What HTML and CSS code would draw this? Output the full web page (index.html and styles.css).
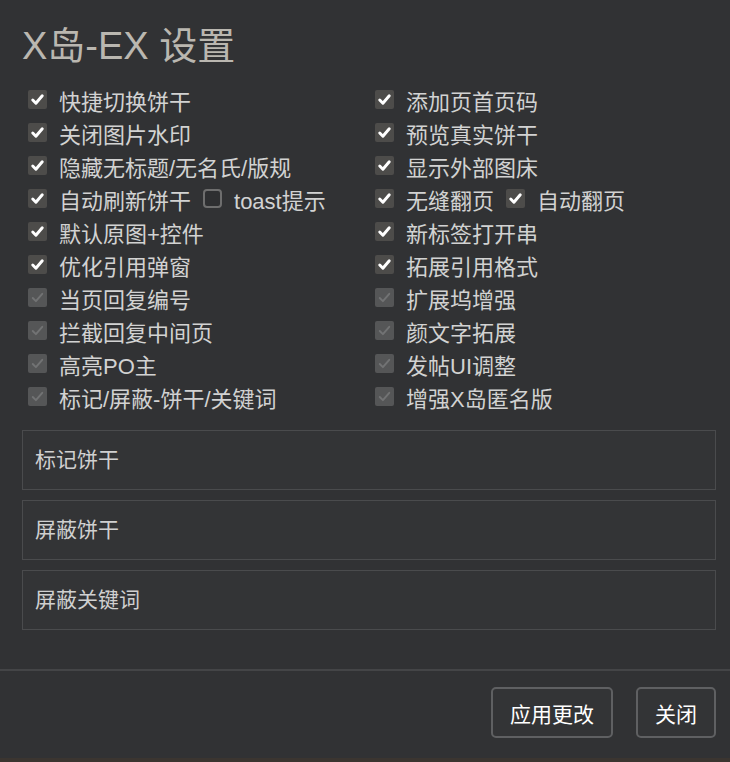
FILE: index.html
```html
<!DOCTYPE html>
<html lang="zh-CN">
<head>
    <meta charset="UTF-8">
    <meta name="viewport" content="width=device-width, initial-scale=1.0">
    <title>X岛-EX 设置</title>
    <link rel="stylesheet" href="styles.css">
</head>
<body>
    <div class="dialog">
        <div class="dialog-body">
            <h1>X岛-EX 设置</h1>
            <div class="options">
                <div class="opt"><span class="box on"><svg viewBox="0 0 18 18"><path d="M4.5 9.5l3 3 6-7"/></svg></span>快捷切换饼干</div>
                <div class="opt"><span class="box on"><svg viewBox="0 0 18 18"><path d="M4.5 9.5l3 3 6-7"/></svg></span>添加页首页码</div>
                <div class="opt"><span class="box on"><svg viewBox="0 0 18 18"><path d="M4.5 9.5l3 3 6-7"/></svg></span>关闭图片水印</div>
                <div class="opt"><span class="box on"><svg viewBox="0 0 18 18"><path d="M4.5 9.5l3 3 6-7"/></svg></span>预览真实饼干</div>
                <div class="opt"><span class="box on"><svg viewBox="0 0 18 18"><path d="M4.5 9.5l3 3 6-7"/></svg></span>隐藏无标题/无名氏/版规</div>
                <div class="opt"><span class="box on"><svg viewBox="0 0 18 18"><path d="M4.5 9.5l3 3 6-7"/></svg></span>显示外部图床</div>
                <div class="opt"><span class="box on"><svg viewBox="0 0 18 18"><path d="M4.5 9.5l3 3 6-7"/></svg></span>自动刷新饼干<span class="box off sub"></span>toast提示</div>
                <div class="opt"><span class="box on"><svg viewBox="0 0 18 18"><path d="M4.5 9.5l3 3 6-7"/></svg></span>无缝翻页<span class="box on sub"><svg viewBox="0 0 18 18"><path d="M4.5 9.5l3 3 6-7"/></svg></span>自动翻页</div>
                <div class="opt"><span class="box on"><svg viewBox="0 0 18 18"><path d="M4.5 9.5l3 3 6-7"/></svg></span>默认原图+控件</div>
                <div class="opt"><span class="box on"><svg viewBox="0 0 18 18"><path d="M4.5 9.5l3 3 6-7"/></svg></span>新标签打开串</div>
                <div class="opt"><span class="box on"><svg viewBox="0 0 18 18"><path d="M4.5 9.5l3 3 6-7"/></svg></span>优化引用弹窗</div>
                <div class="opt"><span class="box on"><svg viewBox="0 0 18 18"><path d="M4.5 9.5l3 3 6-7"/></svg></span>拓展引用格式</div>
                <div class="opt"><span class="box dis"><svg viewBox="0 0 18 18"><path d="M4.5 9.5l3 3 6-7"/></svg></span>当页回复编号</div>
                <div class="opt"><span class="box dis"><svg viewBox="0 0 18 18"><path d="M4.5 9.5l3 3 6-7"/></svg></span>扩展坞增强</div>
                <div class="opt"><span class="box dis"><svg viewBox="0 0 18 18"><path d="M4.5 9.5l3 3 6-7"/></svg></span>拦截回复中间页</div>
                <div class="opt"><span class="box dis"><svg viewBox="0 0 18 18"><path d="M4.5 9.5l3 3 6-7"/></svg></span>颜文字拓展</div>
                <div class="opt"><span class="box dis"><svg viewBox="0 0 18 18"><path d="M4.5 9.5l3 3 6-7"/></svg></span>高亮PO主</div>
                <div class="opt"><span class="box dis"><svg viewBox="0 0 18 18"><path d="M4.5 9.5l3 3 6-7"/></svg></span>发帖UI调整</div>
                <div class="opt"><span class="box dis"><svg viewBox="0 0 18 18"><path d="M4.5 9.5l3 3 6-7"/></svg></span>标记/屏蔽-饼干/关键词</div>
                <div class="opt"><span class="box dis"><svg viewBox="0 0 18 18"><path d="M4.5 9.5l3 3 6-7"/></svg></span>增强X岛匿名版</div>
            </div>
            <textarea class="field" placeholder="标记饼干"></textarea>
            <textarea class="field" placeholder="屏蔽饼干"></textarea>
            <textarea class="field" placeholder="屏蔽关键词"></textarea>
        </div>
        <div class="dialog-footer">
            <button class="btn">应用更改</button>
            <button class="btn">关闭</button>
        </div>
    </div>
</body>
</html>
```

FILE: styles.css
```css
body {
    margin: 0;
    padding: 0;
    background-color: #3b3530;
    font-family: 'Liberation Sans', 'Noto Sans CJK SC', sans-serif;
}

.dialog {
    width: 730px;
    height: 758px;
    background-color: #313234;
    display: flex;
    flex-direction: column;
}

.dialog-body {
    padding: 20px 14px 0 22px;
    flex: 1;
}

h1 {
    margin: 0 0 11px;
    font-size: 38px;
    line-height: 52px;
    font-weight: normal;
    color: #bab7b0;
}

.options {
    display: grid;
    grid-template-columns: 347px 347px;
    margin-bottom: 17px;
}

.opt {
    display: flex;
    align-items: center;
    height: 33px;
    padding-left: 6px;
    font-size: 22px;
    color: #d2d2d2;
}

.box {
    width: 19px;
    height: 19px;
    border-radius: 2px;
    margin-right: 12px;
    box-sizing: border-box;
    flex-shrink: 0;
}

.box svg {
    display: block;
    width: 19px;
    height: 19px;
    fill: none;
    stroke-width: 2.8;
    stroke-linecap: round;
    stroke-linejoin: round;
}

.box.on {
    background-color: #4d4c4a;
}

.box.on svg {
    stroke: #ffffff;
}

.box.dis {
    background-color: #555657;
}

.box.dis svg {
    stroke: #727374;
    stroke-width: 1.8;
}

.box.off {
    border: 2px solid #6e6e6e;
    border-radius: 4px;
    background-color: #2e2f31;
}

.box.sub {
    margin-left: 12px;
}

.field {
    display: block;
    width: 694px;
    height: 60px;
    margin: 0 0 10px;
    padding: 15px 12px;
    box-sizing: border-box;
    background-color: #333436;
    border: 1px solid #4a4b4d;
    border-radius: 0;
    resize: none;
    font-family: 'Liberation Sans', 'Noto Sans CJK SC', sans-serif;
    font-size: 21px;
    line-height: 28px;
    color: #d2d2d2;
    overflow: hidden;
}

.field::placeholder {
    color: #d0d0d0;
}

.dialog-footer {
    border-top: 2px solid #444547;
    padding: 16px 14px 20px 0;
    display: flex;
    justify-content: flex-end;
    gap: 23px;
}

.btn {
    height: 51px;
    padding: 0 17px;
    background-color: #333436;
    border: 2px solid #5f6062;
    border-radius: 5px;
    font-family: 'Liberation Sans', 'Noto Sans CJK SC', sans-serif;
    font-size: 21px;
    color: #ffffff;
    cursor: pointer;
}
```
